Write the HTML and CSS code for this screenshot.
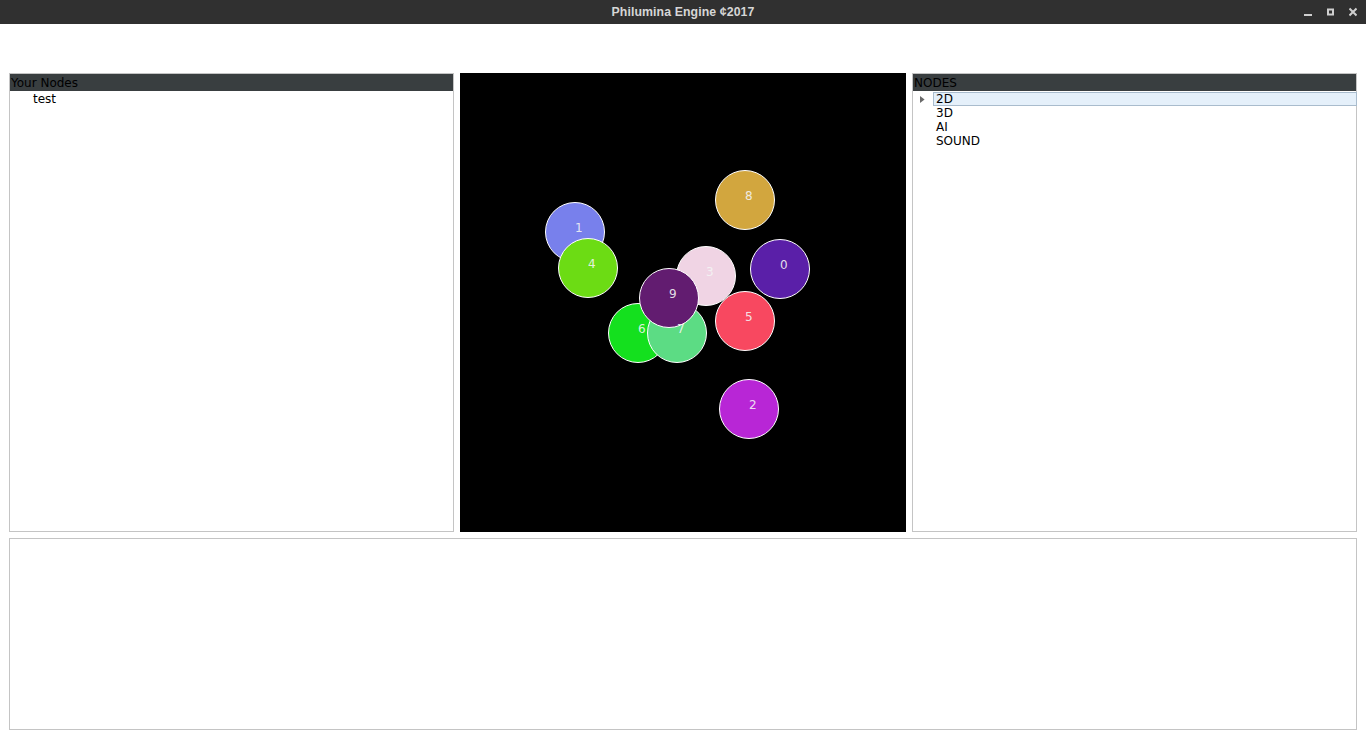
FILE: index.html
```html
<!DOCTYPE html>
<html>
<head>
<meta charset="utf-8">
<title>Philumina Engine ¢2017</title>
<link rel="stylesheet" href="styles.css">
</head>
<body>
<div class="titlebar">
  <div class="tb-side"></div>
  <div class="tb-title">Philumina Engine ¢2017</div>
  <div class="tb-controls">
    <svg class="wbtn" width="8" height="24" viewBox="0 0 8 24"><rect x="0" y="14" width="8" height="2" fill="#cfcfcf"/></svg>
    <svg class="wbtn" width="7" height="24" viewBox="0 0 7 24"><rect x="1" y="9.5" width="5" height="5" fill="none" stroke="#cfcfcf" stroke-width="2"/></svg>
    <svg class="wbtn" width="8" height="24" viewBox="0 0 8 24"><path d="M0.5 8.5 L7.5 15.5 M7.5 8.5 L0.5 15.5" stroke="#cfcfcf" stroke-width="2"/></svg>
  </div>
</div>
<div class="menu-space"></div>
<div class="main">
  <div class="top-row">
    <div class="panel">
      <div class="panel-header">Your Nodes</div>
      <div class="tree">
        <div class="row leaf">test</div>
      </div>
    </div>
    <div class="canvas">
      <svg width="446" height="459" viewBox="0 0 446 459">
        <g stroke="#ffffff" stroke-width="1">
          <circle cx="320" cy="196" r="29.5" fill="#5a1fa8"/>
          <circle cx="115" cy="159" r="29.5" fill="#7880ec"/>
          <circle cx="289" cy="336" r="29.5" fill="#b826d6"/>
          <circle cx="246" cy="203" r="29.5" fill="#f0d4e4"/>
          <circle cx="128" cy="195" r="29.5" fill="#6cdc14"/>
          <circle cx="285" cy="248" r="29.5" fill="#f84860"/>
          <circle cx="178" cy="260" r="29.5" fill="#14e01e"/>
          <circle cx="217" cy="260" r="29.5" fill="#5cdc84"/>
          <circle cx="285" cy="127" r="29.5" fill="#d2a63e"/>
          <circle cx="209" cy="225" r="29.5" fill="#621c70"/>
        </g>
        <g class="labels">
          <text x="320" y="196">0</text>
          <text x="115" y="159">1</text>
          <text x="289" y="336">2</text>
          <text x="246" y="203">3</text>
          <text x="128" y="195">4</text>
          <text x="285" y="248">5</text>
          <text x="178" y="260">6</text>
          <text x="217" y="260">7</text>
          <text x="285" y="127">8</text>
          <text x="209" y="225">9</text>
        </g>
      </svg>
    </div>
    <div class="panel">
      <div class="panel-header">NODES</div>
      <div class="tree">
        <div class="row branch">
          <svg class="arrow" width="5" height="7" viewBox="0 0 5 7"><path d="M0 0 L4.6 3.5 L0 7 Z" fill="#6a6a6a"/></svg>
          <span class="label selected">2D</span>
        </div>
        <div class="row item">3D</div>
        <div class="row item">AI</div>
        <div class="row item">SOUND</div>
      </div>
    </div>
  </div>
  <div class="bottom-panel"></div>
</div>
</body>
</html>
```
FILE: styles.css
```css
html, body {
  margin: 0;
  padding: 0;
  background: #ffffff;
  font-family: "DejaVu Sans", "Liberation Sans", sans-serif;
  font-size: 12px;
  color: #000;
}

.titlebar {
  height: 24px;
  background: #303030;
  display: grid;
  grid-template-columns: 1fr auto 1fr;
  align-items: center;
}

.tb-title {
  color: #d6d6d6;
  font-family: "Liberation Sans", "DejaVu Sans", sans-serif;
  font-size: 12.3px;
  font-weight: bold;
  letter-spacing: 0.1px;
}

.tb-controls {
  display: flex;
  justify-content: flex-end;
  align-items: flex-start;
  gap: 15px;
  padding-right: 9px;
  height: 24px;
}

.wbtn {
  display: block;
}

.menu-space {
  height: 49px;
}

.main {
  padding: 0 9px;
  display: flex;
  flex-direction: column;
  gap: 6px;
}

.top-row {
  display: grid;
  grid-template-columns: 445px 446px 445px;
  gap: 6px;
  height: 459px;
}

.panel {
  border: 1px solid #c4c4c4;
  background: #fff;
  display: flex;
  flex-direction: column;
}

.panel-header {
  height: 16px;
  padding-top: 1px;
  line-height: 17px;
  background: #393e40;
  color: #000;
  padding-left: 1px;
  white-space: nowrap;
}

.tree {
  display: flex;
  flex-direction: column;
  padding-top: 1px;
}

.row {
  height: 14px;
  line-height: 14px;
  white-space: nowrap;
}

.row.leaf {
  padding-left: 23px;
}

.row.branch {
  display: flex;
  align-items: center;
  padding-left: 7px;
}

.arrow {
  display: block;
  margin-right: 8px;
}

.label.selected {
  flex: 1;
  height: 12px;
  line-height: 12px;
  background: #e5f0fa;
  border: 1px solid #a9bccd;
  padding-left: 2px;
  margin-right: -1px;
}

.row.item {
  padding-left: 23px;
}

.canvas {
  background: #000;
  overflow: hidden;
}

.canvas svg {
  display: block;
}

.labels text {
  fill: #f4f4f4;
  fill-opacity: 0.9;
  font-family: "DejaVu Sans", sans-serif;
  font-size: 12px;
}

.bottom-panel {
  height: 190px;
  border: 1px solid #c4c4c4;
}
```
